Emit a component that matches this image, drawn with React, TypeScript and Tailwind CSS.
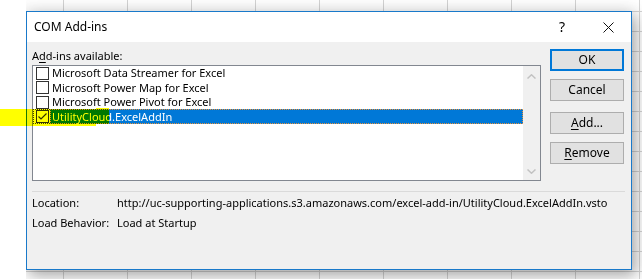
import React from "react";

const ITEMS = [
  "Microsoft Data Streamer for Excel",
  "Microsoft Power Map for Excel",
  "Microsoft Power Pivot for Excel",
];

const Checkbox = ({ checked = false }: { checked?: boolean }) => (
  <div className="flex h-[13px] w-[13px] items-center justify-center border border-[#333333] bg-white">
    {checked && (
      <svg width="11" height="11" viewBox="0 0 11 11">
        <polyline points="1.5,5.5 4,8 9.5,2.5" fill="none" stroke="#333333" strokeWidth="1.2" />
      </svg>
    )}
  </div>
);

const DialogButton = ({ children, primary = false }: { children: React.ReactNode; primary?: boolean }) => (
  <div
    className={
      primary
        ? "flex h-[22px] w-[74px] items-center justify-center border-2 border-[#0078d7] bg-[#e1e1e1] text-black"
        : "flex h-[22px] w-[74px] items-center justify-center border border-[#adadad] bg-[#e1e1e1] text-black"
    }
  >
    {children}
  </div>
);

export default function App() {
  return (
    <div className="relative h-[279px] w-[642px] overflow-hidden whitespace-nowrap bg-white font-['Noto_Sans',sans-serif] text-[11px] leading-[16px] text-black">
      {/* spreadsheet behind the dialog */}
      <div className="absolute bottom-0 left-[26px] right-0 top-0 overflow-hidden bg-white bg-[linear-gradient(to_right,#d4d4d4_1px,transparent_1px),linear-gradient(to_bottom,#d4d4d4_1px,transparent_1px)] bg-[size:64px_20px] bg-[position:37px_11px]">
        <div className="absolute left-0 top-[11px] flex h-[259px] w-[606px] flex-col border border-[#1979ca] bg-[#f0f0f0] shadow-[0_0_14px_3px_rgba(0,0,0,0.1),4px_6px_14px_rgba(0,0,0,0.28)]">
          {/* title bar */}
          <div className="flex h-[30px] items-center bg-white">
            <span className="flex-1 pl-[7px] text-[12px]">COM Add-ins</span>
            <div className="flex h-[30px] w-[46px] items-center justify-center text-[14px]">?</div>
            <div className="flex h-[30px] w-[46px] items-center justify-center">
              <svg width="11" height="11" viewBox="0 0 11 11">
                <path d="M0.5 0.5 L10.5 10.5 M10.5 0.5 L0.5 10.5" stroke="#111111" strokeWidth="1" />
              </svg>
            </div>
          </div>

          {/* body */}
          <div className="flex flex-1 flex-col pl-[5px] pr-[6px] pt-[6px]">
            <div className="flex">
              <div className="w-[509px]">
                <div className="h-[16px]">
                  A<span className="underline underline-offset-2">d</span>d-ins available:
                </div>
                <div className="mt-[1px] flex h-[116px] border border-[#828790] bg-white">
                  <div className="flex flex-1 flex-col">
                    {ITEMS.map((item, i) => (
                      <div key={item} className={i === 1 ? "flex h-[15px] items-center" : "flex h-[14px] items-center"}>
                        <div className="flex w-[17px] justify-center pl-[1px]">
                          <Checkbox />
                        </div>
                        <span className="pl-[2px]">{item}</span>
                      </div>
                    ))}
                    <div className="flex h-[15px] items-stretch">
                      <div className="flex w-[17px] items-center justify-center border-y border-l border-dotted border-[#444444] pl-[1px]">
                        <Checkbox checked />
                      </div>
                      <div className="flex flex-1 items-center border border-dotted border-[#e8913a] bg-[#0078d7] pl-[1px] text-white">
                        UtilityCloud.ExcelAddIn
                      </div>
                    </div>
                  </div>
                  {/* scrollbar */}
                  <div className="flex w-[17px] flex-col items-center justify-between bg-[#f0f0f0] pb-[6px] pt-[8px]">
                    <svg width="9" height="5" viewBox="0 0 9 5">
                      <polyline points="0.5,4.5 4.5,0.8 8.5,4.5" fill="none" stroke="#c2c2c2" strokeWidth="1.5" />
                    </svg>
                    <svg width="9" height="5" viewBox="0 0 9 5">
                      <polyline points="0.5,0.5 4.5,4.2 8.5,0.5" fill="none" stroke="#c2c2c2" strokeWidth="1.5" />
                    </svg>
                  </div>
                </div>
              </div>

              <div className="ml-[9px] mt-[1px] flex flex-col text-[12px]">
                <DialogButton primary>OK</DialogButton>
                <div className="mt-[8px]">
                  <DialogButton>Cancel</DialogButton>
                </div>
                <div className="mt-[11px]">
                  <DialogButton>
                    <span>
                      <span className="underline underline-offset-2">A</span>dd...
                    </span>
                  </DialogButton>
                </div>
                <div className="mt-[8px]">
                  <DialogButton>
                    <span>
                      <span className="underline underline-offset-2">R</span>emove
                    </span>
                  </DialogButton>
                </div>
              </div>
            </div>

            <div className="mt-[10px] h-px w-[593px] bg-[#dadada]" />

            <div className="mt-[3px] flex h-[16px]">
              <span className="w-[85px]">Location:</span>
              <span>http://uc-supporting-applications.s3.amazonaws.com/excel-add-in/UtilityCloud.ExcelAddIn.vsto</span>
            </div>
            <div className="mt-[4px] flex h-[16px]">
              <span className="w-[85px]">Load Behavior:</span>
              <span>Load at Startup</span>
            </div>
          </div>
        </div>
      </div>

      {/* highlighter mark over the selected add-in */}
      <div className="absolute left-0 top-[109px] h-[17px] w-[96px] bg-[#ffff00] mix-blend-multiply" />
      <div className="absolute left-[96px] top-[108px] h-[16px] w-[13px] bg-[#ffff00] mix-blend-multiply" />
    </div>
  );
}
